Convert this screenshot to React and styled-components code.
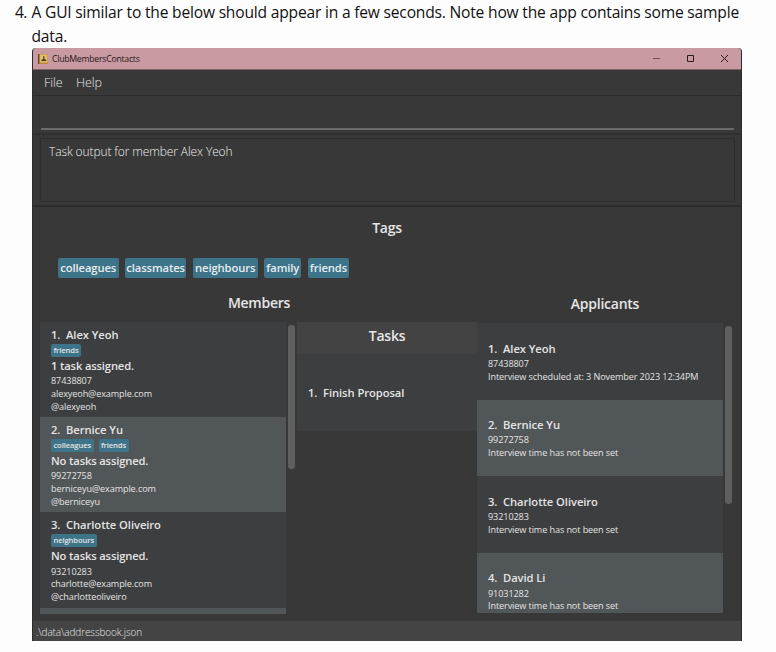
import React from "react";
import styled, { createGlobalStyle } from "styled-components";

const GlobalStyle = createGlobalStyle`
  * { box-sizing: border-box; }
  body { margin: 0; background: #fdfdfd; overflow: hidden; }
  body, p, h2 { font-family: "Open Sans", "Noto Sans", sans-serif; }
  p, h2, ol, ul { margin: 0; padding: 0; }
`;

const Page = styled.main`
  height: 652px;
  display: flex;
  flex-direction: column;
`;

const Step = styled.section`
  display: grid;
  grid-template-columns: 31.5px 1fr;
  height: 48px;
  font-size: 15.6px;
  line-height: 24px;
  letter-spacing: -0.197px;
  color: #111;
`;

const StepNumber = styled.span`
  padding-left: 15px;
  letter-spacing: -0.6px;
`;

const StepText = styled.p`
  width: 730px;
  white-space: pre-line;
`;

const Window = styled.section`
  display: flex;
  flex-direction: column;
  width: 710px;
  height: 593px;
  margin-left: 32px;
  background: #383838;
  border-radius: 4px 4px 0 0;
  border-left: 1px solid #2d2d2d;
  border-right: 1px solid #2d2d2d;
  overflow: hidden;
  color: #e4e4e4;
`;

const TitleBar = styled.header`
  display: flex;
  align-items: center;
  height: 22px;
  margin: 0 -1px;
  padding: 0 13px 0 6px;
  background: #ca9aa2;
  border-bottom: 1px solid #806469;
  color: #24191b;
`;

const TitleText = styled.span`
  flex: 1;
  margin-left: 4px;
  font-size: 8.7px;
  letter-spacing: -0.25px;
`;

const WindowButtons = styled.div`
  display: flex;
  gap: 25px;
  svg { display: block; }
`;

const MenuBar = styled.nav`
  display: flex;
  gap: 13.5px;
  height: 26px;
  padding-left: 11px;
  border-bottom: 1px solid #2b2b2b;
  font-size: 12.6px;
  line-height: 25px;
  letter-spacing: -0.1px;
  color: #e6e6e6;
  font-weight: 300;
`;

const CommandArea = styled.div`
  height: 39px;
  padding: 0 7px 3px 8px;
  border-bottom: 2px solid #2f2f2f;
`;

const CommandInput = styled.div`
  height: 34px;
  border-bottom: 2px solid #6b6b6b;
`;

const ResultArea = styled.div`
  height: 72px;
  padding: 3px 6px 3px 7px;
  border-bottom: 2px solid #2c2c2c;
`;

const ResultBox = styled.div`
  height: 64px;
  padding: 4px 8px;
  border: 1px solid #2d2d2d;
  border-radius: 1px;
  font-size: 12px;
  font-weight: 300;
  line-height: 17px;
  letter-spacing: -0.11px;
  color: #f0f0f0;
`;

const Heading = styled.h2`
  font-size: 14px;
  font-weight: 600;
  letter-spacing: -0.25px;
  line-height: 20px;
  text-align: center;
  color: #e6e6e6;
`;

const TagSection = styled.section`
  height: 86px;
  padding-top: 11px;
`;

const TagCloud = styled.div`
  display: flex;
  gap: 6.6px;
  margin: 20px 0 0 25px;
`;

const Tag = styled.span`
  width: ${(p) => p.$width}px;
  height: 20px;
  border-radius: 2px;
  background: #3e7489;
  color: #e8eef0;
  text-align: center;
  font-size: 11.2px;
  font-weight: 600;
  line-height: 19px;
  letter-spacing: -0.08px;
`;

const Columns = styled.div`
  display: grid;
  grid-template-columns: 257px 180px 256px;
  height: 328px;
  padding-left: 7px;
`;

const Column = styled.section`
  padding-top: ${(p) => p.$top}px;
`;

const ColumnTitle = styled(Heading)`
  width: ${(p) => p.$width}px;
  height: 29px;
`;

const ScrollPane = styled.div`
  display: grid;
  grid-template-columns: 246px 7px;
  column-gap: 2px;
  height: ${(p) => p.$height}px;
`;

const List = styled.ol`
  height: 100%;
  overflow: hidden;
  list-style: none;
`;

const ScrollThumb = styled.div`
  height: ${(p) => p.$height}px;
  margin-top: 3px;
  border-radius: 3px;
  background: #5f5f5f;
`;

const Card = styled.li`
  height: ${(p) => p.$height}px;
  padding: ${(p) => p.$top}px 0 0 11px;
  background: ${(p) => (p.$alt ? "#515658" : "#3c3e3f")};
  white-space: pre;
`;

const Name = styled.p`
  font-size: 11.2px;
  font-weight: 600;
  letter-spacing: -0.06px;
  line-height: 16px;
`;

const Assigned = styled(Name)`
  letter-spacing: -0.15px;
`;

const Details = styled.div`
  padding-top: 1.2px;
`;

const Detail = styled.p`
  font-size: 9.1px;
  letter-spacing: -0.1px;
  line-height: 12.8px;
`;

const SmallTags = styled.div`
  display: flex;
  gap: 5px;
  height: 15px;
  padding-top: 1px;
`;

const SmallTag = styled.span`
  height: 12.5px;
  padding: 0 2.4px;
  border-radius: 2px;
  background: #3e7489;
  font-size: 7.6px;
  font-weight: 600;
  line-height: 12px;
  letter-spacing: -0.08px;
`;

const TaskHeader = styled.div`
  height: 32px;
  padding-top: 4px;
  background: #434343;
`;

const StatusBar = styled.footer`
  height: 20px;
  margin: 0 -1px;
  margin-top: auto;
  padding-left: 4px;
  background: #444;
  font-size: 10px;
  font-weight: 300;
  line-height: 22px;
  letter-spacing: -0.11px;
`;

const tags = [
  ["colleagues", 60.5],
  ["classmates", 61],
  ["neighbours", 65],
  ["family", 37],
  ["friends", 41],
];

const members = [
  { name: "Alex Yeoh", tags: ["friends"], tasks: "1 task assigned.", phone: "87438807", email: "alexyeoh@example.com", handle: "@alexyeoh" },
  { name: "Bernice Yu", tags: ["colleagues", "friends"], tasks: "No tasks assigned.", phone: "99272758", email: "berniceyu@example.com", handle: "@berniceyu" },
  { name: "Charlotte Oliveiro", tags: ["neighbours"], tasks: "No tasks assigned.", phone: "93210283", email: "charlotte@example.com", handle: "@charlotteoliveiro" },
];

const applicants = [
  ["Alex Yeoh", "87438807", "Interview scheduled at: 3 November 2023 12:34PM"],
  ["Bernice Yu", "99272758", "Interview time has not been set"],
  ["Charlotte Oliveiro", "93210283", "Interview time has not been set"],
  ["David Li", "91031282", "Interview time has not been set"],
];

function AppIcon() {
  return (
    <svg width="10" height="10" viewBox="0 0 10 10">
      <rect width="10" height="10" rx="0.6" fill="#b98a3e" />
      <rect x="2" y="0.5" width="7.5" height="8" fill="#e3bb6a" />
      <rect width="1.2" height="10" fill="#5e4a33" />
      <path d="M5.2 2.2h1.2v3h-1.2z" fill="#4b3a26" />
      <path d="M3.4 6.9V6l1.8-1h1.2l1.8 1v.9z" fill="#4b3a26" />
    </svg>
  );
}

export default function App() {
  return (
    <Page>
      <GlobalStyle />
      <Step>
        <StepNumber>4.</StepNumber>
        <StepText>
          {"A GUI similar to the below should appear in a few seconds. Note how the app contains some sample\ndata."}
        </StepText>
      </Step>
      <Window>
        <TitleBar>
          <AppIcon />
          <TitleText>ClubMembersContacts</TitleText>
          <WindowButtons>
            <svg width="9" height="9" viewBox="0 0 9 9"><path d="M1 4.5h7" stroke="#6d5257" /></svg>
            <svg width="9" height="9" viewBox="0 0 9 9"><path d="M1.5 1.5h6v6h-6z" fill="none" stroke="#2a1d20" /></svg>
            <svg width="9" height="9" viewBox="0 0 9 9"><path d="M1 1l7 7M8 1L1 8" stroke="#2a1d20" /></svg>
          </WindowButtons>
        </TitleBar>
        <MenuBar>
          <span>File</span>
          <span>Help</span>
        </MenuBar>
        <CommandArea><CommandInput /></CommandArea>
        <ResultArea><ResultBox>Task output for member Alex Yeoh</ResultBox></ResultArea>
        <TagSection>
          <Heading>Tags</Heading>
          <TagCloud>
            {tags.map(([label, width]) => <Tag key={label} $width={width}>{label}</Tag>)}
          </TagCloud>
        </TagSection>
        <Columns>
          <Column $top={0}>
            <ColumnTitle $width={438}>Members</ColumnTitle>
            <ScrollPane $height={292}>
              <List>
                {members.map((m, i) => (
                  <Card key={m.name} $height={95.2} $top={5} $alt={i % 2 === 1}>
                    <Name>{`${i + 1}.  ${m.name}`}</Name>
                    <SmallTags>{m.tags.map((t) => <SmallTag key={t}>{t}</SmallTag>)}</SmallTags>
                    <Assigned>{m.tasks}</Assigned>
                    <Details>
                      <Detail>{m.phone}</Detail>
                      <Detail>{m.email}</Detail>
                      <Detail>{m.handle}</Detail>
                    </Details>
                  </Card>
                ))}
                <Card $height={95.2} $top={5} $alt />
              </List>
              <ScrollThumb $height={144} />
            </ScrollPane>
          </Column>
          <Column $top={29}>
            <TaskHeader><Heading>Tasks</Heading></TaskHeader>
            <Card as="div" $height={77} $top={30.5}><Name>1.  Finish Proposal</Name></Card>
          </Column>
          <Column $top={1}>
            <ColumnTitle $width={256}>Applicants</ColumnTitle>
            <ScrollPane $height={290}>
              <List>
                {applicants.map(([name, phone, note], i) => (
                  <Card key={name} $height={76.6} $top={17.6} $alt={i % 2 === 1}>
                    <Name>{`${i + 1}.  ${name}`}</Name>
                    <Details>
                      <Detail>{phone}</Detail>
                      <Detail>{note}</Detail>
                    </Details>
                  </Card>
                ))}
              </List>
              <ScrollThumb $height={178} />
            </ScrollPane>
          </Column>
        </Columns>
        <StatusBar>{".\\data\\addressbook.json"}</StatusBar>
      </Window>
    </Page>
  );
}
